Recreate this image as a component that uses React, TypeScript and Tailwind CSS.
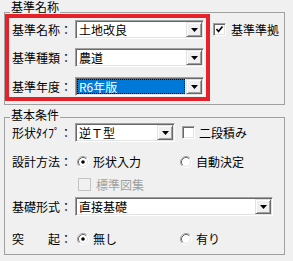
import React from 'react';

// 小さな▼
const Arrow = () => (
  <svg width="7" height="4" viewBox="0 0 7 4">
    <polygon points="0,0 7,0 3.5,4" fill="#000" />
  </svg>
);

type ComboProps = { value: string; width: string; selected?: boolean };

const Combo = ({ value, width, selected }: ComboProps) => (
  <div
    className={`flex h-[19px] shrink-0 bg-white p-[1px] border border-t-[#a0a0a0] border-l-[#a0a0a0] border-r-white border-b-white shadow-[inset_1px_1px_0_#696969,inset_-1px_-1px_0_#e3e3e3] ${width}`}
  >
    {selected ? (
      <div className="flex-1 mr-[1px] flex items-center pl-[1px] bg-[#0078d7] text-white border border-dotted border-black">
        {value}
      </div>
    ) : (
      <div className="flex-1 flex items-center pl-[2px]">{value}</div>
    )}
    <div className="w-[16px] h-full flex items-center justify-center bg-[#f0f0f0] border border-t-[#e3e3e3] border-l-[#e3e3e3] border-r-[#696969] border-b-[#696969] shadow-[inset_1px_1px_0_#fff,inset_-1px_-1px_0_#a0a0a0]">
      <Arrow />
    </div>
  </div>
);

const CheckBox = ({ checked, disabled }: { checked?: boolean; disabled?: boolean }) => (
  <div
    className={
      disabled
        ? 'w-[13px] h-[13px] shrink-0 border border-[#c4c4c4] bg-[#f0f0f0]'
        : 'w-[13px] h-[13px] shrink-0 flex items-center justify-center bg-white border border-t-[#a0a0a0] border-l-[#a0a0a0] border-r-white border-b-white shadow-[inset_1px_1px_0_#696969,inset_-1px_-1px_0_#e3e3e3]'
    }
  >
    {checked && (
      <svg width="9" height="9" viewBox="0 0 9 9">
        <polyline points="1.5,4 3.5,6.5 7.5,1.5" fill="none" stroke="#000" strokeWidth="1.7" />
      </svg>
    )}
  </div>
);

const Radio = ({ checked }: { checked?: boolean }) => (
  <svg width="12" height="12" viewBox="0 0 12 12" className="shrink-0">
    <circle cx="6" cy="6" r="5" fill="#fff" />
    <path d="M2.11 9.89 A5.5 5.5 0 0 1 9.89 2.11" fill="none" stroke="#a0a0a0" />
    <path d="M9.89 2.11 A5.5 5.5 0 0 1 2.11 9.89" fill="none" stroke="#fff" />
    <path d="M2.82 9.18 A4.5 4.5 0 0 1 9.18 2.82" fill="none" stroke="#696969" />
    <path d="M9.18 2.82 A4.5 4.5 0 0 1 2.82 9.18" fill="none" stroke="#e3e3e3" />
    {checked && <circle cx="6" cy="6" r="1.8" fill="#000" />}
  </svg>
);

const Label = ({ children }: { children: React.ReactNode }) => (
  <div className="w-[63px] shrink-0 whitespace-pre">{children}</div>
);

const RadioOption = ({ text, checked, width }: { text: string; checked?: boolean; width: string }) => (
  <div className={`flex items-center ${width}`}>
    <Radio checked={checked} />
    <span className="ml-[4px]">{text}</span>
  </div>
);

export default function App() {
  return (
    <div className="w-[293px] h-[261px] overflow-hidden bg-[#f0f0f0] text-black text-[12px] leading-[12px] font-['Noto_Sans_CJK_JP',sans-serif] pt-[12px] pl-[4px]">
      {/* 基準名称 */}
      <div className="relative w-[281px] h-[93px] border border-[#a0a0a0] flex items-start">
        <div className="absolute left-[5px] -top-[12px] px-[1px] bg-[#f0f0f0]">基準名称</div>

        <div className="mt-[1px] w-[205px] h-[87px] shrink-0 border-4 border-[#e62129] pt-[2px] pl-[3px] flex flex-col">
          <div className="flex items-center h-[19px]">
            <Label>基準名称：</Label>
            <Combo value="土地改良" width="w-[129px]" />
          </div>
          <div className="flex items-center h-[19px] mt-[9px]">
            <Label>基準種類：</Label>
            <Combo value="農道" width="w-[129px]" />
          </div>
          <div className="flex items-center h-[19px] mt-[10px]">
            <Label>基準年度：</Label>
            <Combo value="R6年版" width="w-[129px]" selected />
          </div>
        </div>

        <div className="ml-[3px] mt-[7px] h-[19px] flex items-center">
          <CheckBox checked />
          <span className="ml-[5px]">基準準拠</span>
        </div>
      </div>

      {/* 基本条件 */}
      <div className="relative mt-[12px] w-[281px] h-[138px] border border-[#a0a0a0] pt-[5px] pl-[7px] flex flex-col">
        <div className="absolute left-[5px] -top-[9px] px-[1px] bg-[#f0f0f0]">基本条件</div>

        <div className="flex items-center h-[19px]">
          <Label>形状ﾀｲﾌﾟ：</Label>
          <Combo value="逆Ｔ型" width="w-[100px]" />
          <div className="ml-[7px]">
            <CheckBox />
          </div>
          <span className="ml-[4px]">二段積み</span>
        </div>

        <div className="flex items-center h-[19px] mt-[10px]">
          <Label>設計方法：</Label>
          <div className="ml-[2px] flex items-center">
            <RadioOption text="形状入力" checked width="w-[103px]" />
            <RadioOption text="自動決定" width="w-[90px]" />
          </div>
        </div>

        <div className="flex items-center h-[19px] mt-[4px] pl-[66px]">
          <CheckBox disabled />
          <span className="ml-[5px] text-[#a0a0a0]">標準図集</span>
        </div>

        <div className="flex items-center h-[19px] mt-[3px]">
          <Label>基礎形式：</Label>
          <Combo value="直接基礎" width="w-[198px]" />
        </div>

        <div className="flex items-center h-[19px] mt-[13px]">
          <Label>{'突　　起：'}</Label>
          <div className="ml-[2px] flex items-center">
            <RadioOption text="無し" checked width="w-[103px]" />
            <RadioOption text="有り" width="w-[60px]" />
          </div>
        </div>
      </div>
    </div>
  );
}
